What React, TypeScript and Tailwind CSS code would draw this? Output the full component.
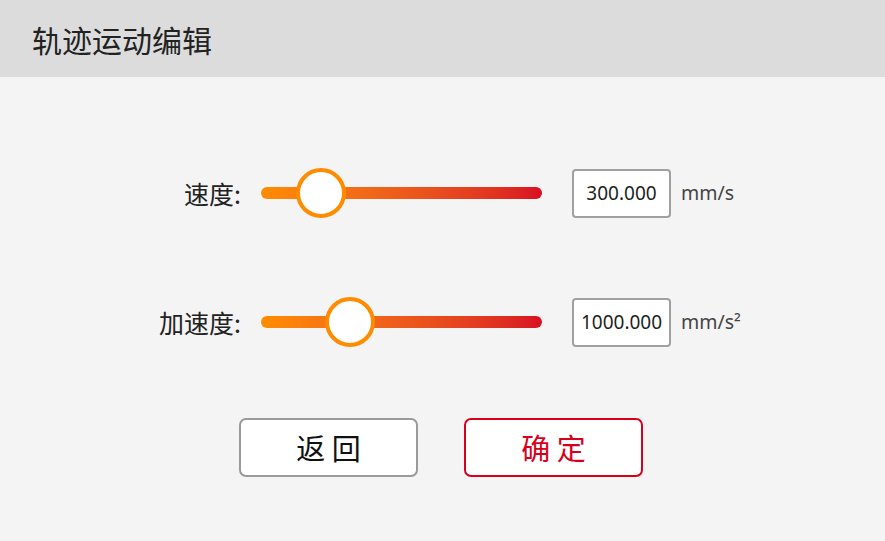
import React from "react";

const cjk = { fontFamily: '"Noto Sans CJK SC", "Noto Sans", sans-serif' };
const latin = { fontFamily: '"Noto Sans", "Open Sans", sans-serif' };

function Row({ label, value, unit, thumbLeft }: { label: string; value: string; unit: string; thumbLeft: number }) {
  return (
    <div className="flex items-center h-[50px]">
      <div className="w-[241px] text-right text-[25px] leading-none text-[#222]" style={cjk}>
        {label}
      </div>
      <div className="relative ml-[20px] w-[281px] h-[50px] flex items-center">
        <div className="w-full h-[12px] rounded-full bg-gradient-to-r from-[#ff8c00] to-[#d90d22]" />
        <div
          className="absolute top-0 w-[50px] h-[50px] rounded-full border-[4px] border-[#ff8c00] bg-white"
          style={{ left: thumbLeft }}
        />
      </div>
      <div
        className="ml-[30px] w-[99px] h-[49px] rounded-[4px] border-2 border-[#a0a0a0] bg-white flex items-center justify-center text-[19px] text-[#1e1e1e]"
        style={latin}
      >
        {value}
      </div>
      <div className="ml-[10px] text-[19.5px] text-[#444]" style={latin}>
        {unit}
      </div>
    </div>
  );
}

export default function App() {
  return (
    <div className="w-[885px] h-[541px] bg-[#f4f4f4] flex flex-col overflow-hidden">
      <div className="h-[77px] bg-[#dcdcdc] flex items-center pl-[32px]">
        <span className="text-[30px] leading-none text-[#222]" style={cjk}>
          轨迹运动编辑
        </span>
      </div>
      <div className="flex flex-col pt-[91px]">
        <Row label="速度:" value="300.000" unit="mm/s" thumbLeft={35} />
        <div className="h-[79px]" />
        <Row label="加速度:" value="1000.000" unit="mm/s²" thumbLeft={64} />
        <div className="h-[71px]" />
        <div className="flex justify-center gap-[46px] pr-[3px]">
          <button
            className="w-[179px] h-[59px] rounded-[7px] border-2 border-[#9a9a9a] bg-white text-[29px] text-[#111] flex items-center justify-center"
            style={cjk}
          >
            返 回
          </button>
          <button
            className="w-[179px] h-[59px] rounded-[7px] border-2 border-[#d9001b] bg-white text-[29px] text-[#d9001b] flex items-center justify-center"
            style={cjk}
          >
            确 定
          </button>
        </div>
      </div>
    </div>
  );
}
